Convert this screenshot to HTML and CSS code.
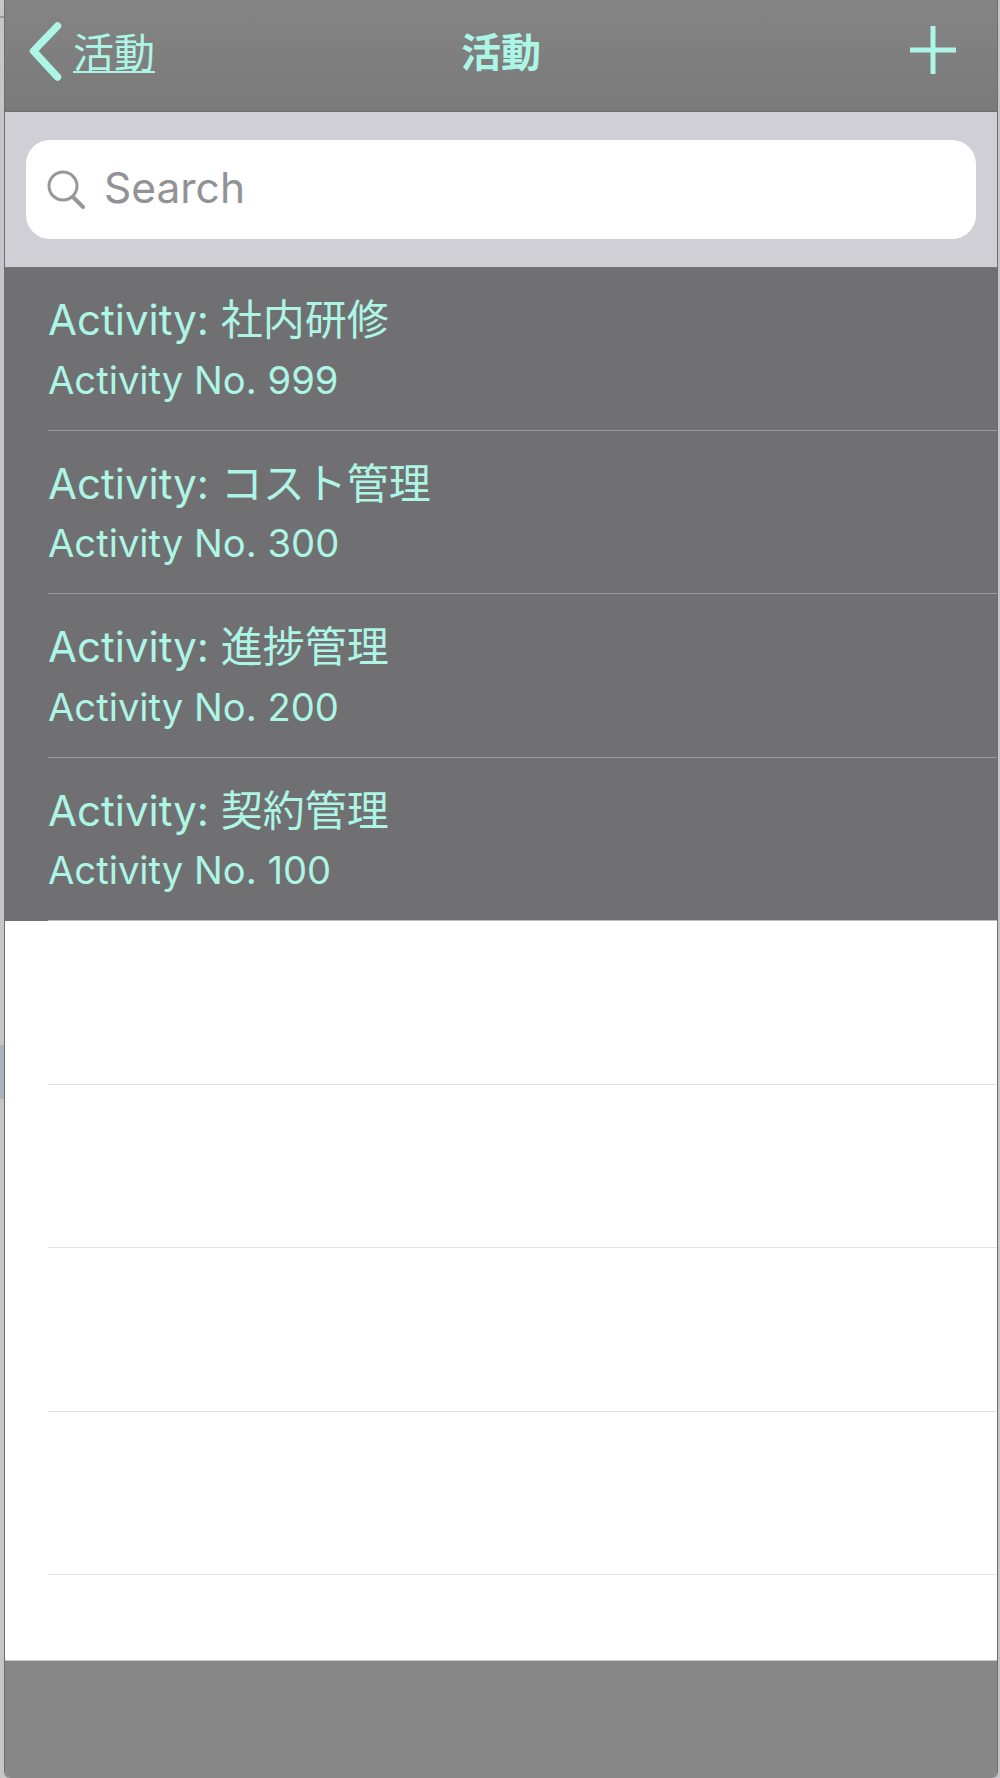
FILE: index.html
```html
<!DOCTYPE html>
<html lang="ja">
<head>
  <meta charset="UTF-8" />
  <title>活動</title>
  <link rel="stylesheet" href="styles.css">
</head>
<body>
  <div class="desk-line"></div>
  <div class="desk-patch"></div>
  <div class="app">
    <header class="navbar">
      <a class="back">
        <svg class="back-icon" width="34" height="62" viewBox="0 0 34 62">
          <path d="M29.5 7 L5.5 32 L29.5 58" fill="none" stroke="#adf5e5" stroke-width="7.5" stroke-linecap="round" stroke-linejoin="round"/>
        </svg>
        <span class="back-label">活動</span>
      </a>
      <h1 class="nav-title">活動</h1>
      <svg class="add-icon" width="46" height="48" viewBox="0 0 46 48">
        <path d="M23 0 V48 M0 24 H46" fill="none" stroke="#adf5e5" stroke-width="5"/>
      </svg>
    </header>

    <div class="searchbar">
      <div class="search-field">
        <svg class="search-icon" width="38" height="40" viewBox="0 0 38 40">
          <circle cx="16" cy="16" r="14" fill="none" stroke="#98989c" stroke-width="3"/>
          <path d="M26 27 L36 37" fill="none" stroke="#98989c" stroke-width="4" stroke-linecap="round"/>
        </svg>
        <span class="search-text">Search</span>
      </div>
    </div>

    <ul class="list">
      <li class="row">
        <div class="row-title">Activity: 社内研修</div>
        <div class="row-sub">Activity No. 999</div>
      </li>
      <li class="row">
        <div class="row-title">Activity: コスト管理</div>
        <div class="row-sub">Activity No. 300</div>
      </li>
      <li class="row">
        <div class="row-title">Activity: 進捗管理</div>
        <div class="row-sub">Activity No. 200</div>
      </li>
      <li class="row">
        <div class="row-title">Activity: 契約管理</div>
        <div class="row-sub">Activity No. 100</div>
      </li>
    </ul>

    <div class="empty">
      <div class="empty-row"></div>
      <div class="empty-row"></div>
      <div class="empty-row"></div>
      <div class="empty-row"></div>
    </div>

    <footer class="toolbar"></footer>
  </div>
</body>
</html>
```

FILE: styles.css
```css
html, body {
  margin: 0;
  height: 100%;
}
body {
  position: relative;
  background-color: #c6c6c8;
  font-family: Inter, "Noto Sans CJK JP", sans-serif;
  color: #adf5e5;
}
/* bits of the desktop showing beside the window */
.desk-line {
  position: absolute;
  left: 0;
  top: 16px;
  width: 4px;
  height: 2px;
  background-color: #999;
}
.desk-patch {
  position: absolute;
  left: 0;
  top: 1045px;
  width: 4px;
  height: 54px;
  background-color: #aab2c0;
}
.app {
  box-sizing: border-box;
  height: 1778px;
  margin: 0 2px 0 4px;
  border-left: 1px solid #6e6e70;
  border-right: 1px solid #6e6e70;
  border-radius: 0 0 6px 6px;
  overflow: hidden;
  display: flex;
  flex-direction: column;
  background-color: #fff;
}

/* top bar */
.navbar {
  height: 112px;
  flex: none;
  box-sizing: border-box;
  padding: 0 41px 12px 23px;
  display: flex;
  align-items: center;
  justify-content: space-between;
  position: relative;
  background: linear-gradient(#848485, #7a7a7b);
  border-bottom: 1px solid #6f6f70;
}
.back {
  display: flex;
  align-items: center;
  gap: 11px;
}
.back-label {
  font-size: 41px;
  text-decoration: underline;
  text-decoration-thickness: 2px;
  text-underline-offset: 3px;
}
.nav-title {
  position: absolute;
  left: 0;
  right: 0;
  margin: 0;
  text-align: center;
  font-size: 40px;
  font-weight: 700;
}

/* search */
.searchbar {
  height: 156px;
  flex: none;
  box-sizing: border-box;
  padding: 28px 21px;
  background-color: #d0cfd5;
  border-bottom: 1px solid #77777a;
}
.search-field {
  height: 99px;
  border-radius: 24px;
  background-color: #fff;
  display: flex;
  align-items: center;
  padding-left: 21px;
  gap: 19px;
}
.search-icon {
  margin-top: 1px;
}
.search-text {
  font-size: 42.5px;
  color: #929296;
  margin-top: -4px;
}

/* activity list */
.list {
  list-style: none;
  margin: 0;
  padding: 0;
  flex: none;
  background-color: #706f71;
}
.row {
  height: 163.5px;
  box-sizing: border-box;
  margin-left: 43px;
  padding-top: 24px;
  border-bottom: 1px solid #9a9a9c;
}
.row:first-child {
  height: 162.5px;
  padding-top: 23px;
}
.row:last-child {
  border-bottom-color: #bbb;
}
.row-title {
  font-size: 42px;
  line-height: 58px;
}
.row-sub {
  font-size: 38.2px;
  line-height: 50px;
  margin-top: 5.5px;
}

/* empty table rows */
.empty {
  flex: 1;
  background-color: #fff;
}
.empty-row {
  height: 163.5px;
  box-sizing: border-box;
  margin-left: 43px;
  border-bottom: 1px solid #e4e4e6;
}

.toolbar {
  height: 117px;
  flex: none;
  background-color: #878788;
  border-top: 1px solid #c8c8c8;
}
```
